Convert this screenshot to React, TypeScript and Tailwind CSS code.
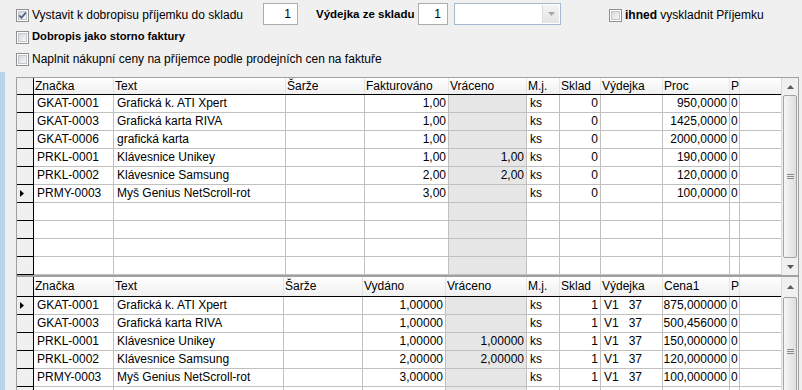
import React from "react";

type Col = { w: string; label: string; align: "l" | "r" | "c"; gray?: boolean };

const topCols: Col[] = [
  { w: "w-[80px]", label: "Značka", align: "l" },
  { w: "w-[172px]", label: "Text", align: "l" },
  { w: "w-[79px]", label: "Šarže", align: "l" },
  { w: "w-[84px]", label: "Fakturováno", align: "r" },
  { w: "w-[78px]", label: "Vráceno", align: "r", gray: true },
  { w: "w-[33px]", label: "M.j.", align: "l" },
  { w: "w-[41px]", label: "Sklad", align: "r" },
  { w: "w-[62px]", label: "Výdejka", align: "l" },
  { w: "w-[67px]", label: "Proc", align: "r" },
  { w: "w-[10px]", label: "P", align: "c" },
];

const bottomCols: Col[] = [
  { w: "w-[80px]", label: "Značka", align: "l" },
  { w: "w-[170px]", label: "Text", align: "l" },
  { w: "w-[79px]", label: "Šarže", align: "l" },
  { w: "w-[83px]", label: "Vydáno", align: "r" },
  { w: "w-[81px]", label: "Vráceno", align: "r", gray: true },
  { w: "w-[33px]", label: "M.j.", align: "l" },
  { w: "w-[41px]", label: "Sklad", align: "r" },
  { w: "w-[62px]", label: "Výdejka", align: "l" },
  { w: "w-[67px]", label: "Cena1", align: "r" },
  { w: "w-[10px]", label: "P", align: "c" },
];

const topRows: string[][] = [
  ["GKAT-0001", "Grafická k. ATI Xpert", "", "1,00", "", "ks", "0", "", "950,0000", "0"],
  ["GKAT-0003", "Grafická karta RIVA", "", "1,00", "", "ks", "0", "", "1425,0000", "0"],
  ["GKAT-0006", "grafická karta", "", "1,00", "", "ks", "0", "", "2000,0000", "0"],
  ["PRKL-0001", "Klávesnice Unikey", "", "1,00", "1,00", "ks", "0", "", "190,0000", "0"],
  ["PRKL-0002", "Klávesnice Samsung", "", "2,00", "2,00", "ks", "0", "", "120,0000", "0"],
  ["PRMY-0003", "Myš Genius NetScroll-rot", "", "3,00", "", "ks", "0", "", "100,0000", "0"],
];

const bottomRows: string[][] = [
  ["GKAT-0001", "Grafická k. ATI Xpert", "", "1,00000", "", "ks", "1", "V1   37", "875,000000", "0"],
  ["GKAT-0003", "Grafická karta RIVA", "", "1,00000", "", "ks", "1", "V1   37", "500,456000", "0"],
  ["PRKL-0001", "Klávesnice Unikey", "", "1,00000", "1,00000", "ks", "1", "V1   37", "150,000000", "0"],
  ["PRKL-0002", "Klávesnice Samsung", "", "2,00000", "2,00000", "ks", "1", "V1   37", "120,000000", "0"],
  ["PRMY-0003", "Myš Genius NetScroll-rot", "", "3,00000", "", "ks", "1", "V1   37", "100,000000", "0"],
];

function Check({ checked }: { checked?: boolean }) {
  return (
    <span className="flex h-[13px] w-[13px] shrink-0 items-center justify-center border border-[#8e8f8f] bg-white p-[1px]">
      <span className="relative flex h-full w-full items-center justify-center border border-[#c4c6c9] bg-gradient-to-br from-[#d6d8db] to-[#f7f7f7]">
        {checked && (
          <svg width="9" height="9" viewBox="0 0 9 9" className="absolute">
            <path d="M1.2 4.4 L3.5 6.8 L7.8 1.6" fill="none" stroke="#4b5f8e" strokeWidth="1.7" />
          </svg>
        )}
      </span>
    </span>
  );
}

function Arrow({ down, color = "#5a5a5a" }: { down?: boolean; color?: string }) {
  return (
    <svg width="7" height="4" viewBox="0 0 7 4">
      <polygon points={down ? "0,0 7,0 3.5,4" : "0,4 7,4 3.5,0"} fill={color} />
    </svg>
  );
}

function ScrollBar({ upH, withDown }: { upH: string; withDown?: boolean }) {
  return (
    <div className="flex w-[17px] shrink-0 flex-col border-l border-[#dadada] bg-[#f0f0f0]">
      <div className={`${upH} flex shrink-0 items-center justify-center`}>
        <Arrow />
      </div>
      <div className="mx-[1px] flex flex-1 items-center justify-center rounded-[2px] border border-[#a3a3a3] bg-gradient-to-r from-[#f6f6f6] to-[#dedede]">
        <div className="flex flex-col gap-[1px]">
          <span className="h-[1px] w-[7px] bg-[#8a8a8a]" />
          <span className="h-[1px] w-[7px] bg-[#8a8a8a]" />
          <span className="h-[1px] w-[7px] bg-[#8a8a8a]" />
        </div>
      </div>
      {withDown && (
        <div className="flex h-[17px] shrink-0 items-center justify-center">
          <Arrow down />
        </div>
      )}
    </div>
  );
}

function RowMark() {
  return (
    <svg width="4" height="7" viewBox="0 0 4 7">
      <polygon points="0,0 4,3.5 0,7" fill="#000" />
    </svg>
  );
}

function cellAlign(a: Col["align"]) {
  if (a === "r") return "pr-[2px] text-right";
  if (a === "c") return "pl-[1px] text-left";
  return "pl-[3px] text-left";
}

function Grid({
  cols,
  rows,
  empty,
  current,
  headH,
  headLead,
  upH,
  withDown,
  frame,
}: {
  cols: Col[];
  rows: string[][];
  empty: number;
  current: number;
  headH: string;
  headLead: string;
  upH: string;
  withDown?: boolean;
  frame: string;
}) {
  const all = [...rows, ...Array.from({ length: empty }, () => cols.map(() => ""))];
  return (
    <div className={`flex w-[783px] border-[#a0a0a0] ${frame}`}>
      <div className="flex flex-1 flex-col">
        <div className={`flex ${headH} shrink-0 border-b border-black bg-gradient-to-b from-white to-[#f0f0f0]`}>
          <div className="w-[17px] shrink-0 border-r border-black bg-[#f0f0f0]" />
          {cols.map((c) => (
            <div
              key={c.label}
              className={`${c.w} ${headLead} shrink-0 overflow-hidden whitespace-nowrap border-r border-[#e4e4e4] pl-[1px]`}
            >
              {c.label}
            </div>
          ))}
          <div className="flex-1" />
        </div>
        {all.map((r, i) => (
          <div key={i} className="flex h-[18px] shrink-0">
            <div className="flex w-[17px] shrink-0 items-center border-b border-r border-black bg-[#f0f0f0] pl-[3px]">
              {i === current && <RowMark />}
            </div>
            {cols.map((c, j) => (
              <div
                key={j}
                className={`${c.w} ${cellAlign(c.align)} ${c.gray ? "bg-[#e6e6e6]" : "bg-white"} shrink-0 overflow-hidden whitespace-pre border-b border-r border-[#c0c0c0] leading-[17px]`}
              >
                {r[j]}
              </div>
            ))}
            <div className="flex-1 border-b border-[#c0c0c0] bg-white" />
          </div>
        ))}
      </div>
      <ScrollBar upH={upH} withDown={withDown} />
    </div>
  );
}

export default function App() {
  return (
    <div className="flex h-[390px] w-[802px] flex-col overflow-hidden bg-[#f0f0f0] font-['Liberation_Sans',Arial,sans-serif] text-[12px] leading-none text-black">
      <div className="flex flex-col pt-[4px]">
        <div className="flex h-[22px] items-center pl-[16px]">
          <div className="flex w-[247px] items-center gap-[3px]">
            <Check checked />
            <span>Vystavit k dobropisu příjemku do skladu</span>
          </div>
          <div className="flex h-[22px] w-[35px] -translate-y-[1px] items-center justify-end border border-[#acacac] bg-white pr-[6px]">
            1
          </div>
          <div className="ml-[18px] w-[102px] whitespace-nowrap text-[11.5px] font-bold">Výdejka ze skladu</div>
          <div className="flex h-[22px] w-[30px] -translate-y-[1px] items-center justify-end border border-[#acacac] bg-white pr-[6px]">
            1
          </div>
          <div className="ml-[6px] flex h-[22px] w-[107px] -translate-y-[1px] justify-end border border-[#a7b9d1] bg-white p-[1px]">
            <div className="flex w-[17px] items-center justify-center border-l border-[#dcdcdc] bg-gradient-to-b from-[#f4f4f4] to-[#e4e4e4]">
              <Arrow down color="#a8a8a8" />
            </div>
          </div>
          <div className="ml-[48px] flex items-center gap-[3px]">
            <Check />
            <span>
              <b>ihned</b> vyskladnit Příjemku
            </span>
          </div>
        </div>
        <div className="flex h-[22px] items-center gap-[3px] pl-[16px]">
          <Check />
          <span className="text-[11.2px] font-bold">Dobropis jako storno faktury</span>
        </div>
        <div className="flex h-[22px] items-center gap-[3px] pl-[16px]">
          <Check />
          <span>Naplnit nákupní ceny na příjemce podle prodejních cen na faktuře</span>
        </div>
      </div>
      <div className="mt-[2px] flex flex-1">
        <div className="w-[5px] shrink-0 bg-[#bcd3ec]" />
        <div className="ml-[11px] flex flex-col pt-[5px]">
          <Grid
            cols={topCols}
            rows={topRows}
            empty={4}
            current={5}
            headH="h-[17px]"
            headLead="leading-[16px]"
            upH="h-[17px]"
            withDown
            frame="border"
          />
          <Grid
            cols={bottomCols}
            rows={bottomRows}
            empty={1}
            current={0}
            headH="h-[20px]"
            headLead="leading-[19px]"
            upH="h-[20px]"
            frame="border-x border-t"
          />
        </div>
      </div>
    </div>
  );
}
